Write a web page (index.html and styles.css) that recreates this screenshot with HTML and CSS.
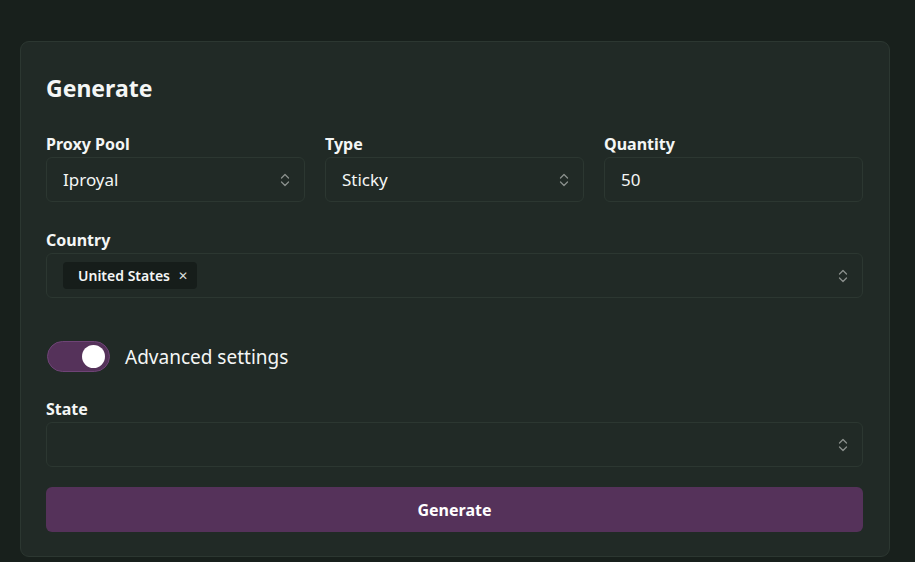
FILE: index.html
```html
<!DOCTYPE html>
<html lang="en">
<head>
<meta charset="utf-8">
<title>Generate</title>
<link rel="stylesheet" href="styles.css">
</head>
<body>
<main class="page">
  <section class="card">
    <h1 class="title">Generate</h1>
    <div class="row3">
      <div class="field">
        <label class="label">Proxy Pool</label>
        <div class="control select"><span class="value">Iproyal</span>
          <svg class="chev" viewBox="0 0 10 16" width="10" height="16"><path d="M1.5 6 L5 2.5 L8.5 6 M1.5 10 L5 13.5 L8.5 10" fill="none" stroke="#8a8f8c" stroke-width="1.3" stroke-linecap="round" stroke-linejoin="round"/></svg>
        </div>
      </div>
      <div class="field">
        <label class="label">Type</label>
        <div class="control select"><span class="value">Sticky</span>
          <svg class="chev" viewBox="0 0 10 16" width="10" height="16"><path d="M1.5 6 L5 2.5 L8.5 6 M1.5 10 L5 13.5 L8.5 10" fill="none" stroke="#8a8f8c" stroke-width="1.3" stroke-linecap="round" stroke-linejoin="round"/></svg>
        </div>
      </div>
      <div class="field">
        <label class="label">Quantity</label>
        <div class="control"><span class="value">50</span></div>
      </div>
    </div>
    <div class="field">
      <label class="label">Country</label>
      <div class="control select multi">
        <span class="chip">United States <span class="x">✕</span></span>
        <svg class="chev" viewBox="0 0 10 16" width="10" height="16"><path d="M1.5 6 L5 2.5 L8.5 6 M1.5 10 L5 13.5 L8.5 10" fill="none" stroke="#8a8f8c" stroke-width="1.3" stroke-linecap="round" stroke-linejoin="round"/></svg>
      </div>
    </div>
    <div class="toggle-row">
      <span class="toggle"><span class="knob"></span></span>
      <span class="toggle-label">Advanced settings</span>
    </div>
    <div class="field">
      <label class="label">State</label>
      <div class="control select">
        <span class="value"></span>
        <svg class="chev" viewBox="0 0 10 16" width="10" height="16"><path d="M1.5 6 L5 2.5 L8.5 6 M1.5 10 L5 13.5 L8.5 10" fill="none" stroke="#8a8f8c" stroke-width="1.3" stroke-linecap="round" stroke-linejoin="round"/></svg>
      </div>
    </div>
    <button class="btn">Generate</button>
  </section>
</main>
</body>
</html>
```
FILE: styles.css
```css
* { box-sizing: border-box; }
html, body { margin: 0; padding: 0; }
body {
  background: #18201c;
  font-family: "Noto Sans", "Open Sans", sans-serif;
  color: #f4f6f5;
  width: 915px;
  height: 562px;
  overflow: hidden;
}
.page { padding: 41px 26px 0 20px; }
.card {
  width: 870px;
  background: #212a26;
  border: 1px solid #2c3731;
  border-radius: 9px;
  padding: 27px 26px 24px 25px;
}
.title {
  margin: 0 0 25px;
  font-size: 23px;
  font-weight: 700;
  line-height: 38px;
}
.row3 {
  display: grid;
  grid-template-columns: repeat(3, 1fr);
  gap: 20px;
  margin-bottom: 26px;
}
.field { display: flex; flex-direction: column; }
.label {
  font-size: 16px;
  font-weight: 700;
  line-height: 24px;
  margin-bottom: 1px;
}
.control {
  height: 45px;
  border: 1px solid #2c3731;
  border-radius: 6px;
  background: #212a26;
  display: flex;
  align-items: center;
  padding: 0 14px 0 16px;
  font-size: 17px;
}
.select { justify-content: space-between; }
.chev { flex: none; }
.multi { padding-left: 16px; }
.chip {
  background: #161d1a;
  border-radius: 4px;
  height: 27px;
  display: inline-flex;
  align-items: center;
  padding: 0 9px 0 15px;
  font-size: 14px;
  font-weight: 600;
  gap: 8px;
}
.chip .x { font-size: 12px; font-weight: 400; color: #d8dcda; }
.toggle-row {
  display: flex;
  align-items: center;
  gap: 15px;
  margin: 43px 0 25px 1px;
}
.toggle {
  width: 63px;
  height: 31px;
  border-radius: 16px;
  background: #55325a;
  border: 1px solid #6e4476;
  display: flex;
  align-items: center;
  justify-content: flex-end;
  padding-right: 4px;
}
.knob { width: 23px; height: 23px; border-radius: 50%; background: #fff; }
.toggle-label { font-size: 19px; }
.btn {
  display: block;
  width: 100%;
  margin-top: 20px;
  height: 45px;
  border: 0;
  border-radius: 6px;
  background: #55325a;
  color: #fff;
  font-family: inherit;
  font-size: 16px;
  font-weight: 700;
}
```
